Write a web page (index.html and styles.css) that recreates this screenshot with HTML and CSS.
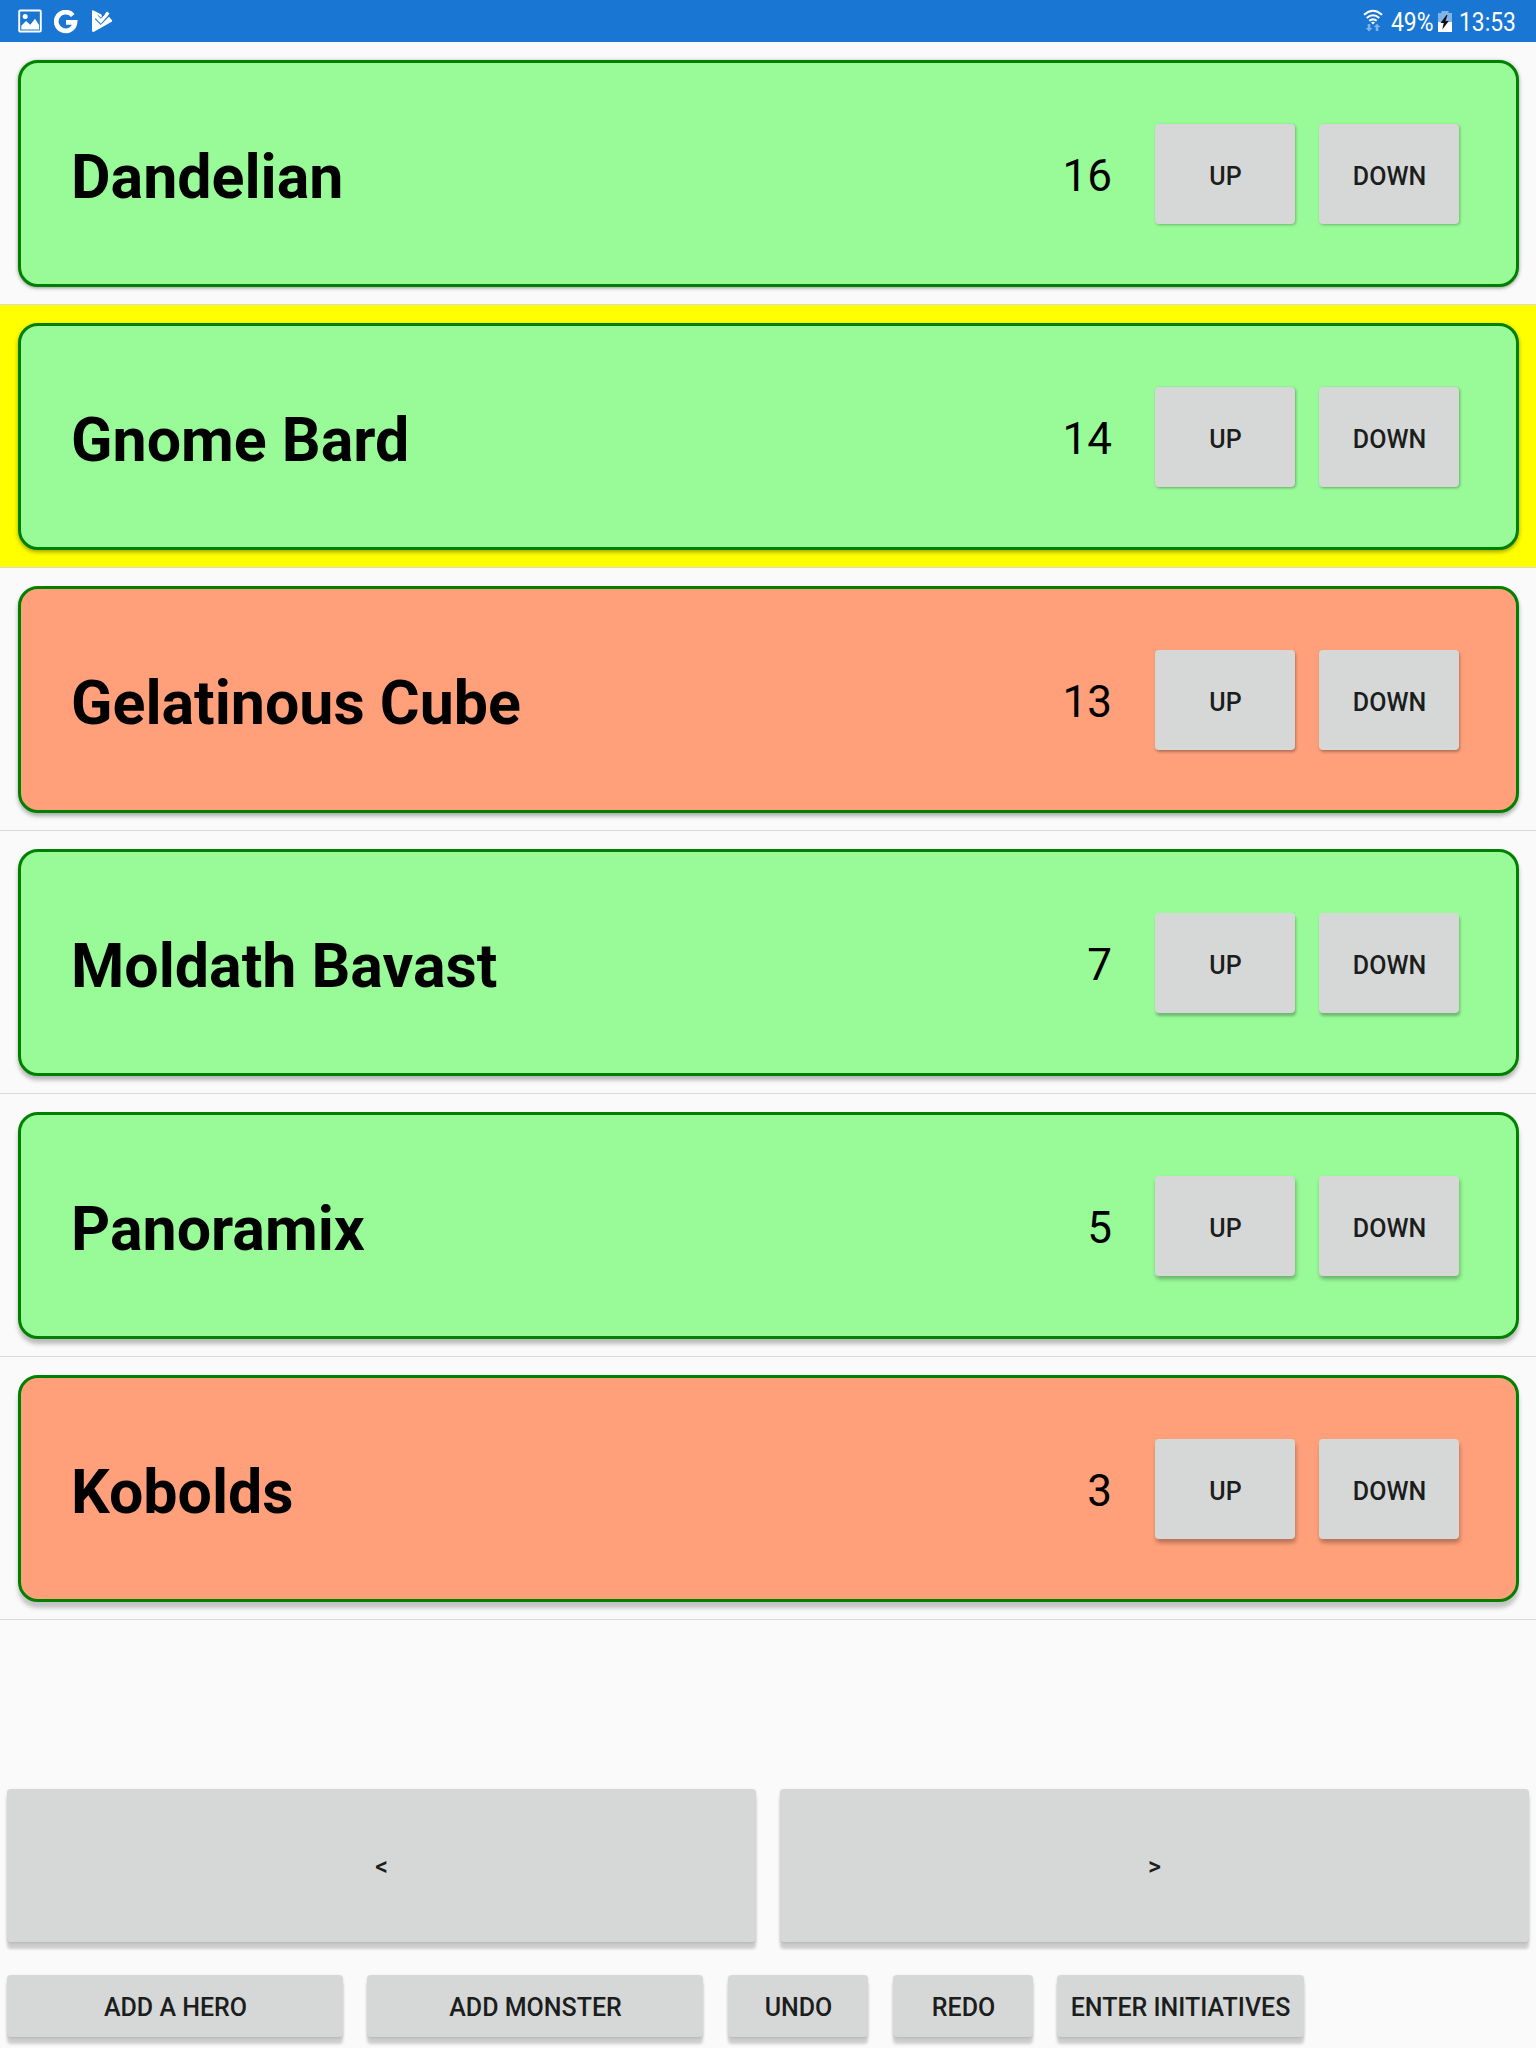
FILE: index.html
```html
<!DOCTYPE html>
<html lang="en">
<head>
<meta charset="utf-8">
<title>Initiative Tracker</title>
<link rel="stylesheet" href="styles.css">
</head>
<body>
<header class="status-bar">
  <div class="notifications">
    <svg width="24" height="24" viewBox="0 0 24 24"><rect x="1.200" y="1.500" width="21.600" height="21" rx="1" fill="none" stroke="#fff" stroke-width="1.900"/><path fill="#fff" d="M3.300 20.500v-3.800L8 12l4.300 3.800 4.700-6 4 6.200v4.500z"/><circle cx="7.200" cy="7.500" r="2.500" fill="#fff"/></svg>
    <svg class="google" width="24" height="24" viewBox="0 0 24 24"><path fill="none" stroke="#fff" stroke-width="4.700" d="M18.800 5.400A9.400 9.400 0 1 0 21 12.400H12"/></svg>
    <svg class="play" width="22" height="24" viewBox="0 0 22 24"><path fill="#fff" d="M1 2.300Q1 .700 2.500 1.400L10.500 5.500 11 9l6-2.500L20.800 11q1 1-.1 1.700L3 22.800q-2 .800-2-1.200z"/><path fill="none" stroke="#1976d2" stroke-width="1.400" d="m4.300 9.600 5.400 5.500L19.200 5.400"/><path fill="none" stroke="#fff" stroke-width="3.400" d="m5.800 8 4 4.200L17.300 3.500"/><path fill="none" stroke="#1976d2" stroke-width="1" d="M6.800 6.200 10 9.300l3.500-4"/></svg>
  </div>
  <div class="indicators">
    <svg class="wifi" width="20" height="24" viewBox="0 0 20 24"><g fill="none" stroke="#fff" stroke-width="2.100"><path d="M1 5.800Q10-2.300 19 5.800M3.700 9Q10 3.500 16.300 9M6.300 11.800q3.700-3 7.400 0"/></g><path fill="#fff" d="m8 13.500q2-1.500 4 0l-2 2z"/><path fill="#80b4e8" d="M4.700 15h2.600v4H9.500L6 22.500 2.800 19h1.900zM12.700 22h2.600v-4h2L14 14.700 10.700 18h2z"/></svg>
    <span class="label battery-level">49%</span>
    <svg class="battery" width="14" height="21" viewBox="0 0 14 21"><path fill="#80b4e8" d="M3.500 0h7v2H14v9H0V2h3.500z"/><path fill="#fff" d="M0 11h14v10H0z"/><path fill="#111" d="M8.500 4 2.500 12h3.200L4.300 18.500 10.800 10H7.500L9.500 4z"/></svg>
    <span class="label clock">13:53</span>
  </div>
</header>
<main class="list">
  <section class="row"><article class="card hero lift-1"><h2 class="name">Dandelian</h2><span class="score">16</span><button class="btn step">UP</button><button class="btn step">DOWN</button></article></section>
  <section class="row active"><article class="card hero lift-2"><h2 class="name">Gnome Bard</h2><span class="score">14</span><button class="btn step">UP</button><button class="btn step">DOWN</button></article></section>
  <section class="row"><article class="card monster lift-3"><h2 class="name">Gelatinous Cube</h2><span class="score">13</span><button class="btn step">UP</button><button class="btn step">DOWN</button></article></section>
  <section class="row"><article class="card hero lift-4"><h2 class="name">Moldath Bavast</h2><span class="score">7</span><button class="btn step">UP</button><button class="btn step">DOWN</button></article></section>
  <section class="row"><article class="card hero lift-5"><h2 class="name">Panoramix</h2><span class="score">5</span><button class="btn step">UP</button><button class="btn step">DOWN</button></article></section>
  <section class="row"><article class="card monster lift-6"><h2 class="name">Kobolds</h2><span class="score">3</span><button class="btn step">UP</button><button class="btn step">DOWN</button></article></section>
</main>
<footer class="controls">
  <nav class="turns"><button class="btn turn">&lt;</button><button class="btn turn">&gt;</button></nav>
  <div class="actions">
    <button class="btn wide">ADD A HERO</button>
    <button class="btn wide">ADD MONSTER</button>
    <button class="btn small">UNDO</button>
    <button class="btn small">REDO</button>
    <button class="btn enter">ENTER INITIATIVES</button>
  </div>
</footer>
</body>
</html>
```
FILE: styles.css
```css
* { box-sizing: border-box; }
body {
  margin: 0;
  height: 2048px;
  display: flex;
  flex-direction: column;
  overflow: hidden;
  background: #fafafa;
  font-family: Roboto, sans-serif;
  color: #000;
}
svg { display: block; flex: none; }

.status-bar {
  height: 42px;
  flex: none;
  display: flex;
  justify-content: space-between;
  padding: 0 18px;
  background: #1976d2;
  color: #fff;
}
.notifications { display: flex; align-items: center; gap: 12px; }
.google { margin-top: 1px; }
.play { margin-left: 1px; }
.indicators { display: flex; align-items: center; }
.label {
  font-size: 26px;
  line-height: 42px;
  transform: scaleX(.88);
  transform-origin: left;
  white-space: nowrap;
  padding-top: 2px;
}
.wifi { margin-right: 8px; }
.battery-level { width: 47px; }
.battery { margin-right: 7px; }
.clock { width: 59px; }

.list { flex: none; }
.row {
  height: 263px;
  padding: 18px 17px 17px 18px;
  border-bottom: 1px solid #dadada;
}
.active { background: #ff0; }
.card {
  height: 227px;
  display: flex;
  align-items: center;
  border: 3px solid #008000;
  border-radius: 20px;
  padding: 0 57px 0 50px;
}
.hero { background: #98fb98; }
.monster { background: #ffa07a; }
.name { flex: 1; margin: 0; padding-top: 8px; font-size: 60.900px; line-height: 70px; font-weight: 700; }
.score { font-size: 44px; line-height: 52px; padding-top: 5px; margin-right: 43px; }

.btn {
  border: 0;
  margin: 0;
  padding: 0;
  border-radius: 4px;
  background: #d6d8d7;
  color: #1c1d1d;
  font: 500 25px/30px Roboto, sans-serif;
  white-space: nowrap;
}
.step { width: 140px; height: 100px; margin-top: 1px; padding: 5px 0 0 1px; }
.step + .step { margin-left: 24px; }

.lift-1 { box-shadow: 0 1px 4px rgba(0,0,0,.3), 0 1px 3px rgba(0,0,0,.12); }
.lift-2 { box-shadow: 0 2px 4px rgba(0,0,0,.36); }
.lift-3 { box-shadow: 0 3px 4px rgba(0,0,0,.32); }
.lift-4 { box-shadow: 0 4px 4px rgba(0,0,0,.28); }
.lift-5 { box-shadow: 0 5px 4px rgba(0,0,0,.25); }
.lift-6 { box-shadow: 0 6px 4px rgba(0,0,0,.22); }
.lift-1 .step { box-shadow: 1px 1px 3px rgba(0,0,0,.28); }
.lift-2 .step { box-shadow: 1px 1px 3px rgba(0,0,0,.32); }
.lift-3 .step { box-shadow: 1px 2px 3px rgba(0,0,0,.3); }
.lift-4 .step { box-shadow: 1px 3px 3px rgba(0,0,0,.28); }
.lift-5 .step { box-shadow: 1px 3px 4px rgba(0,0,0,.3); }
.lift-6 .step { box-shadow: 1px 4px 4px rgba(0,0,0,.28); }

.controls { margin-top: auto; padding: 0 7px 11px; }
.turns { display: flex; gap: 24px; margin-bottom: 33px; }
.turn { flex: 1; height: 153px; padding-top: 2px; }
.actions { display: flex; }
.actions .btn { height: 62px; margin-right: 24px; padding: 4px 0 0 1px; }
.actions .wide { width: 336px; }
.actions .small { width: 140px; }
.actions .wide + .small { margin-left: 1px; }
.actions .small:nth-child(4) { margin-left: 1px; }
.actions .enter { width: 247px; padding-left: 0; }
.controls .btn { box-shadow: 0 7px 3px rgba(0,0,0,.18), 0 1px 3px rgba(0,0,0,.12); }
```
